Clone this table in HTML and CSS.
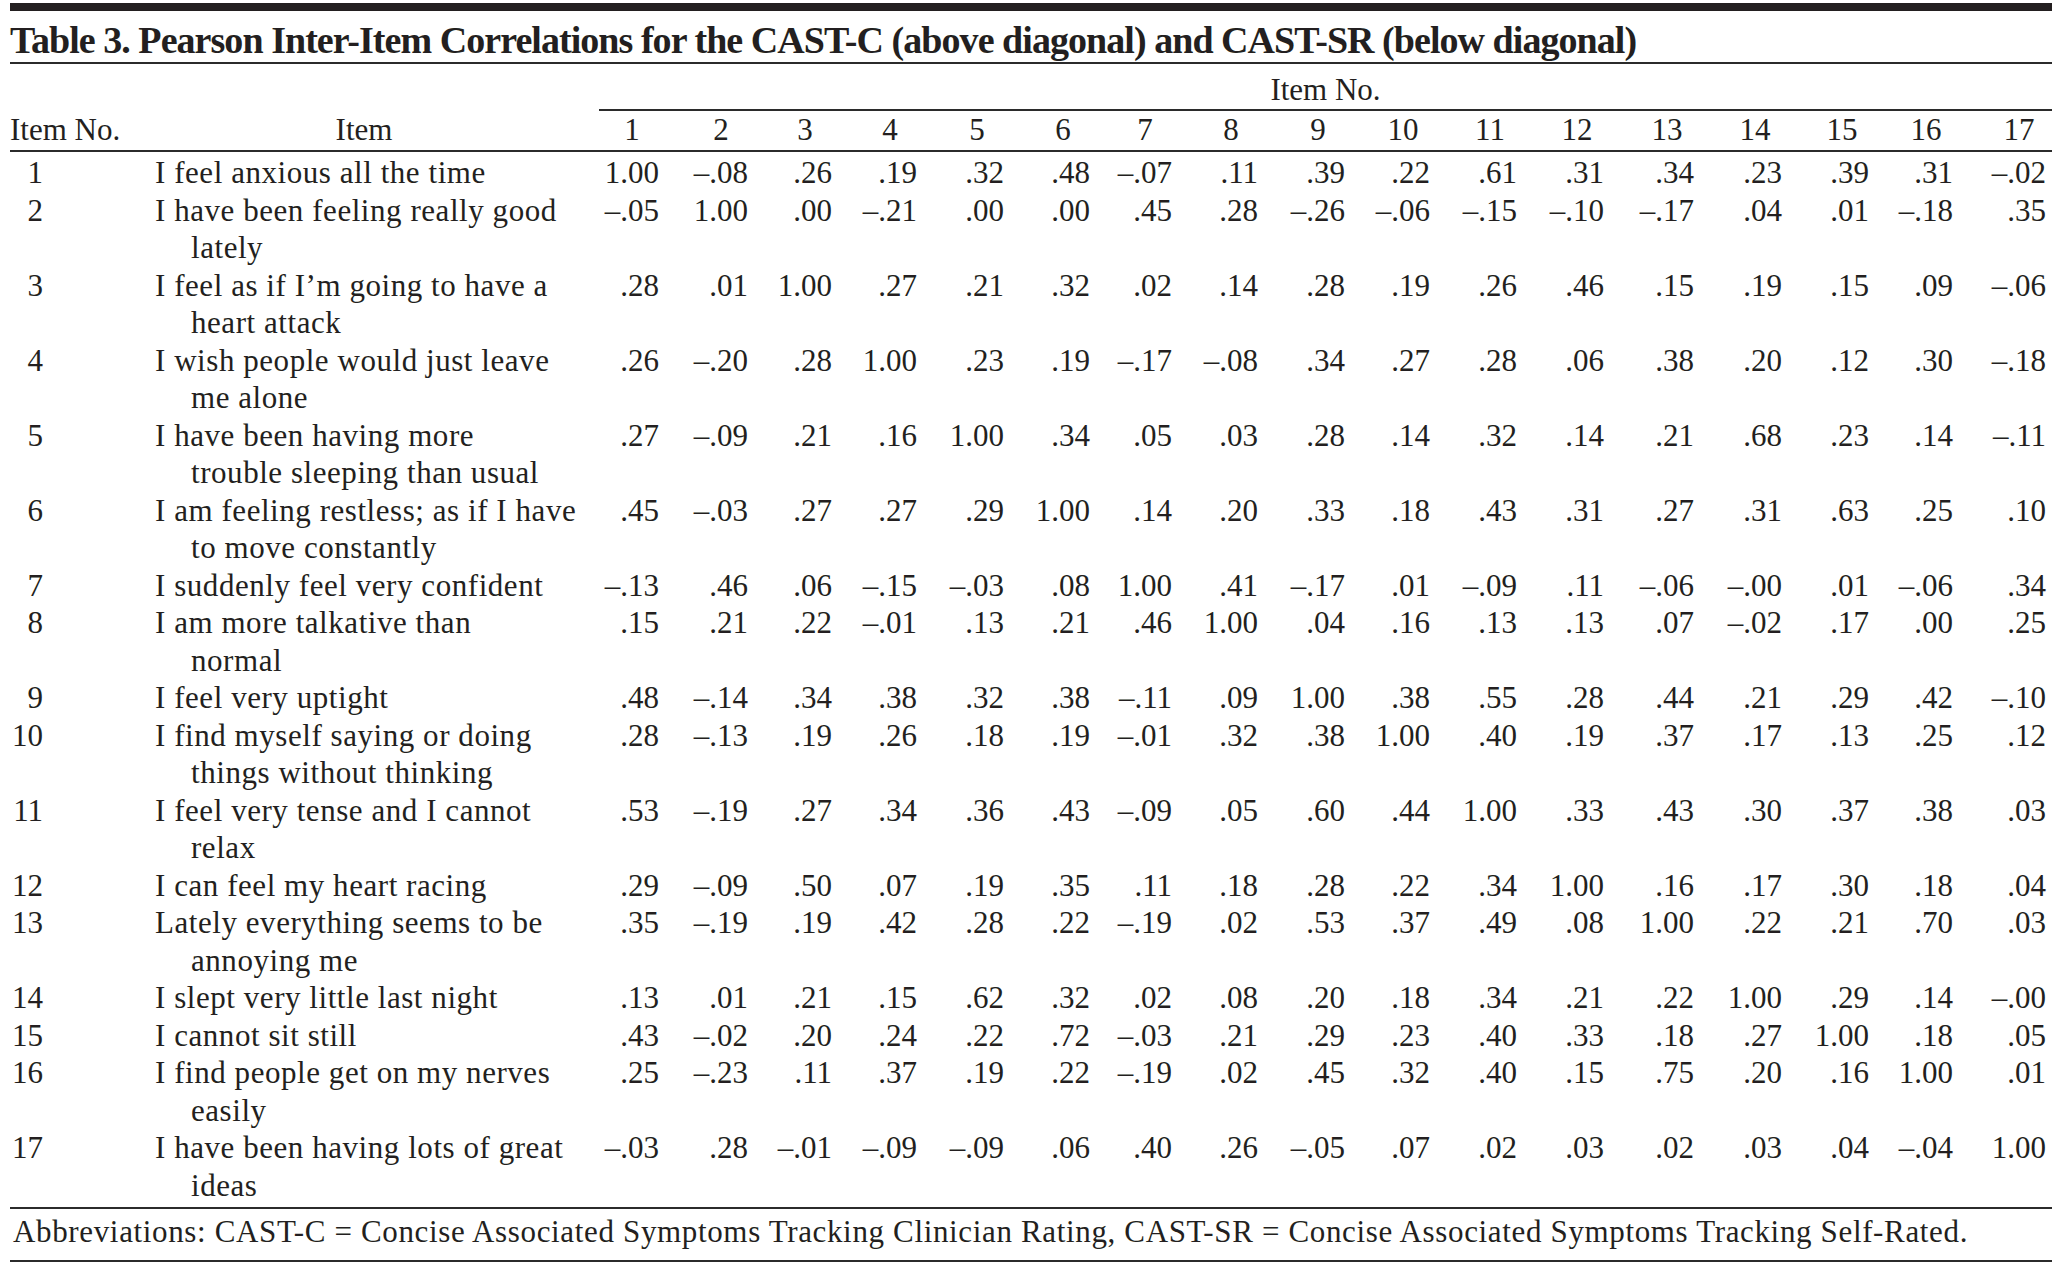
FILE: index.html
```html
<!DOCTYPE html>
<html lang="en">
<head>
<meta charset="utf-8">
<title>Table 3</title>
<link rel="stylesheet" href="styles.css">
</head>
<body>
<div class="page">
  <div class="topbar"></div>
  <div class="title">Table 3. Pearson Inter-Item Correlations for the CAST-C (above diagonal) and CAST-SR (below diagonal)</div>
  <div class="tbl">
    <div class="row hdr1">
      <div></div><div></div>
      <div class="span">Item No.</div>
    </div>
    <div class="row hdr2">
      <div class="no">Item No.</div>
      <div class="ihead">Item</div>
      <div class="h"><span>1</span></div><div class="h"><span>2</span></div><div class="h"><span>3</span></div><div class="h"><span>4</span></div><div class="h"><span>5</span></div><div class="h"><span>6</span></div><div class="h"><span>7</span></div><div class="h"><span>8</span></div><div class="h"><span>9</span></div><div class="h"><span>10</span></div><div class="h"><span>11</span></div><div class="h"><span>12</span></div><div class="h"><span>13</span></div><div class="h"><span>14</span></div><div class="h"><span>15</span></div><div class="h"><span>16</span></div><div class="h"><span>17</span></div>
    </div>
    <div class="body">
      <div class="row"><div class="no">1</div><div class="item"><span>I feel anxious all the time</span></div><div class="v">1.00</div><div class="v">–.08</div><div class="v">.26</div><div class="v">.19</div><div class="v">.32</div><div class="v">.48</div><div class="v">–.07</div><div class="v">.11</div><div class="v">.39</div><div class="v">.22</div><div class="v">.61</div><div class="v">.31</div><div class="v">.34</div><div class="v">.23</div><div class="v">.39</div><div class="v">.31</div><div class="v">–.02</div></div>
      <div class="row"><div class="no">2</div><div class="item"><span>I have been feeling really good<br>lately</span></div><div class="v">–.05</div><div class="v">1.00</div><div class="v">.00</div><div class="v">–.21</div><div class="v">.00</div><div class="v">.00</div><div class="v">.45</div><div class="v">.28</div><div class="v">–.26</div><div class="v">–.06</div><div class="v">–.15</div><div class="v">–.10</div><div class="v">–.17</div><div class="v">.04</div><div class="v">.01</div><div class="v">–.18</div><div class="v">.35</div></div>
      <div class="row"><div class="no">3</div><div class="item"><span>I feel as if I’m going to have a<br>heart attack</span></div><div class="v">.28</div><div class="v">.01</div><div class="v">1.00</div><div class="v">.27</div><div class="v">.21</div><div class="v">.32</div><div class="v">.02</div><div class="v">.14</div><div class="v">.28</div><div class="v">.19</div><div class="v">.26</div><div class="v">.46</div><div class="v">.15</div><div class="v">.19</div><div class="v">.15</div><div class="v">.09</div><div class="v">–.06</div></div>
      <div class="row"><div class="no">4</div><div class="item"><span>I wish people would just leave<br>me alone</span></div><div class="v">.26</div><div class="v">–.20</div><div class="v">.28</div><div class="v">1.00</div><div class="v">.23</div><div class="v">.19</div><div class="v">–.17</div><div class="v">–.08</div><div class="v">.34</div><div class="v">.27</div><div class="v">.28</div><div class="v">.06</div><div class="v">.38</div><div class="v">.20</div><div class="v">.12</div><div class="v">.30</div><div class="v">–.18</div></div>
      <div class="row"><div class="no">5</div><div class="item"><span>I have been having more<br>trouble sleeping than usual</span></div><div class="v">.27</div><div class="v">–.09</div><div class="v">.21</div><div class="v">.16</div><div class="v">1.00</div><div class="v">.34</div><div class="v">.05</div><div class="v">.03</div><div class="v">.28</div><div class="v">.14</div><div class="v">.32</div><div class="v">.14</div><div class="v">.21</div><div class="v">.68</div><div class="v">.23</div><div class="v">.14</div><div class="v">–.11</div></div>
      <div class="row"><div class="no">6</div><div class="item"><span>I am feeling restless; as if I have<br>to move constantly</span></div><div class="v">.45</div><div class="v">–.03</div><div class="v">.27</div><div class="v">.27</div><div class="v">.29</div><div class="v">1.00</div><div class="v">.14</div><div class="v">.20</div><div class="v">.33</div><div class="v">.18</div><div class="v">.43</div><div class="v">.31</div><div class="v">.27</div><div class="v">.31</div><div class="v">.63</div><div class="v">.25</div><div class="v">.10</div></div>
      <div class="row"><div class="no">7</div><div class="item"><span>I suddenly feel very confident</span></div><div class="v">–.13</div><div class="v">.46</div><div class="v">.06</div><div class="v">–.15</div><div class="v">–.03</div><div class="v">.08</div><div class="v">1.00</div><div class="v">.41</div><div class="v">–.17</div><div class="v">.01</div><div class="v">–.09</div><div class="v">.11</div><div class="v">–.06</div><div class="v">–.00</div><div class="v">.01</div><div class="v">–.06</div><div class="v">.34</div></div>
      <div class="row"><div class="no">8</div><div class="item"><span>I am more talkative than<br>normal</span></div><div class="v">.15</div><div class="v">.21</div><div class="v">.22</div><div class="v">–.01</div><div class="v">.13</div><div class="v">.21</div><div class="v">.46</div><div class="v">1.00</div><div class="v">.04</div><div class="v">.16</div><div class="v">.13</div><div class="v">.13</div><div class="v">.07</div><div class="v">–.02</div><div class="v">.17</div><div class="v">.00</div><div class="v">.25</div></div>
      <div class="row"><div class="no">9</div><div class="item"><span>I feel very uptight</span></div><div class="v">.48</div><div class="v">–.14</div><div class="v">.34</div><div class="v">.38</div><div class="v">.32</div><div class="v">.38</div><div class="v">–.11</div><div class="v">.09</div><div class="v">1.00</div><div class="v">.38</div><div class="v">.55</div><div class="v">.28</div><div class="v">.44</div><div class="v">.21</div><div class="v">.29</div><div class="v">.42</div><div class="v">–.10</div></div>
      <div class="row"><div class="no">10</div><div class="item"><span>I find myself saying or doing<br>things without thinking</span></div><div class="v">.28</div><div class="v">–.13</div><div class="v">.19</div><div class="v">.26</div><div class="v">.18</div><div class="v">.19</div><div class="v">–.01</div><div class="v">.32</div><div class="v">.38</div><div class="v">1.00</div><div class="v">.40</div><div class="v">.19</div><div class="v">.37</div><div class="v">.17</div><div class="v">.13</div><div class="v">.25</div><div class="v">.12</div></div>
      <div class="row"><div class="no">11</div><div class="item"><span>I feel very tense and I cannot<br>relax</span></div><div class="v">.53</div><div class="v">–.19</div><div class="v">.27</div><div class="v">.34</div><div class="v">.36</div><div class="v">.43</div><div class="v">–.09</div><div class="v">.05</div><div class="v">.60</div><div class="v">.44</div><div class="v">1.00</div><div class="v">.33</div><div class="v">.43</div><div class="v">.30</div><div class="v">.37</div><div class="v">.38</div><div class="v">.03</div></div>
      <div class="row"><div class="no">12</div><div class="item"><span>I can feel my heart racing</span></div><div class="v">.29</div><div class="v">–.09</div><div class="v">.50</div><div class="v">.07</div><div class="v">.19</div><div class="v">.35</div><div class="v">.11</div><div class="v">.18</div><div class="v">.28</div><div class="v">.22</div><div class="v">.34</div><div class="v">1.00</div><div class="v">.16</div><div class="v">.17</div><div class="v">.30</div><div class="v">.18</div><div class="v">.04</div></div>
      <div class="row"><div class="no">13</div><div class="item"><span>Lately everything seems to be<br>annoying me</span></div><div class="v">.35</div><div class="v">–.19</div><div class="v">.19</div><div class="v">.42</div><div class="v">.28</div><div class="v">.22</div><div class="v">–.19</div><div class="v">.02</div><div class="v">.53</div><div class="v">.37</div><div class="v">.49</div><div class="v">.08</div><div class="v">1.00</div><div class="v">.22</div><div class="v">.21</div><div class="v">.70</div><div class="v">.03</div></div>
      <div class="row"><div class="no">14</div><div class="item"><span>I slept very little last night</span></div><div class="v">.13</div><div class="v">.01</div><div class="v">.21</div><div class="v">.15</div><div class="v">.62</div><div class="v">.32</div><div class="v">.02</div><div class="v">.08</div><div class="v">.20</div><div class="v">.18</div><div class="v">.34</div><div class="v">.21</div><div class="v">.22</div><div class="v">1.00</div><div class="v">.29</div><div class="v">.14</div><div class="v">–.00</div></div>
      <div class="row"><div class="no">15</div><div class="item"><span>I cannot sit still</span></div><div class="v">.43</div><div class="v">–.02</div><div class="v">.20</div><div class="v">.24</div><div class="v">.22</div><div class="v">.72</div><div class="v">–.03</div><div class="v">.21</div><div class="v">.29</div><div class="v">.23</div><div class="v">.40</div><div class="v">.33</div><div class="v">.18</div><div class="v">.27</div><div class="v">1.00</div><div class="v">.18</div><div class="v">.05</div></div>
      <div class="row"><div class="no">16</div><div class="item"><span>I find people get on my nerves<br>easily</span></div><div class="v">.25</div><div class="v">–.23</div><div class="v">.11</div><div class="v">.37</div><div class="v">.19</div><div class="v">.22</div><div class="v">–.19</div><div class="v">.02</div><div class="v">.45</div><div class="v">.32</div><div class="v">.40</div><div class="v">.15</div><div class="v">.75</div><div class="v">.20</div><div class="v">.16</div><div class="v">1.00</div><div class="v">.01</div></div>
      <div class="row"><div class="no">17</div><div class="item"><span>I have been having lots of great<br>ideas</span></div><div class="v">–.03</div><div class="v">.28</div><div class="v">–.01</div><div class="v">–.09</div><div class="v">–.09</div><div class="v">.06</div><div class="v">.40</div><div class="v">.26</div><div class="v">–.05</div><div class="v">.07</div><div class="v">.02</div><div class="v">.03</div><div class="v">.02</div><div class="v">.03</div><div class="v">.04</div><div class="v">–.04</div><div class="v">1.00</div></div>
    </div>
  </div>
  <div class="foot">Abbreviations: CAST-C = Concise Associated Symptoms Tracking Clinician Rating, CAST-SR = Concise Associated Symptoms Tracking Self-Rated.</div>
</div>
</body>
</html>
```
FILE: styles.css
```css
html, body {
  margin: 0;
  padding: 0;
  background: #ffffff;
}

body {
  font-family: "Liberation Serif", "Times New Roman", serif;
  color: #231f20;
}

.page {
  width: 2042px;
  margin-left: 10px;
  padding-top: 3px;
}

.topbar {
  height: 8px;
  background: #231f20;
}

.title {
  font-weight: bold;
  font-size: 38px;
  line-height: 40px;
  letter-spacing: -0.95px;
  margin-top: 9px;
  padding-bottom: 2px;
  border-bottom: 2px solid #2b2b2b;
  white-space: nowrap;
}

.tbl {
  font-size: 31px;
  line-height: 37.5px;
}

.row {
  display: grid;
  grid-template-columns: 35px 554px 60px 89px 84px 85px 87px 86px 82px 86px 87px 85px 87px 87px 90px 88px 87px 84px 93px 6px;
}

.hdr1 {
  padding-top: 7px;
}

.hdr1 .span {
  grid-column: 3 / -1;
  text-align: center;
  border-bottom: 2px solid #2b2b2b;
}

.hdr2 {
  padding-bottom: 2px;
  border-bottom: 2px solid #2b2b2b;
}

.no {
  text-align: right;
  padding-right: 2px;
  white-space: nowrap;
}

.hdr2 .no {
  text-align: left;
  padding-right: 0;
}

.ihead {
  padding-left: 110px;
  padding-right: 26px;
  text-align: center;
}

.h {
  text-align: right;
}

.h span {
  display: inline-block;
  width: 54px;
  text-align: center;
}

.body {
  padding-top: 2px;
  padding-bottom: 3px;
  border-bottom: 2px solid #2b2b2b;
}

.item {
  padding-left: 110px;
  white-space: nowrap;
  letter-spacing: 0.55px;
}

.item span {
  display: block;
  padding-left: 36px;
  text-indent: -36px;
}

.v {
  text-align: right;
  white-space: nowrap;
}

.foot {
  font-size: 31px;
  line-height: 37.5px;
  letter-spacing: 0.65px;
  padding-top: 4px;
  padding-bottom: 9px;
  padding-left: 3px;
  border-bottom: 2px solid #2b2b2b;
  white-space: nowrap;
}
```
